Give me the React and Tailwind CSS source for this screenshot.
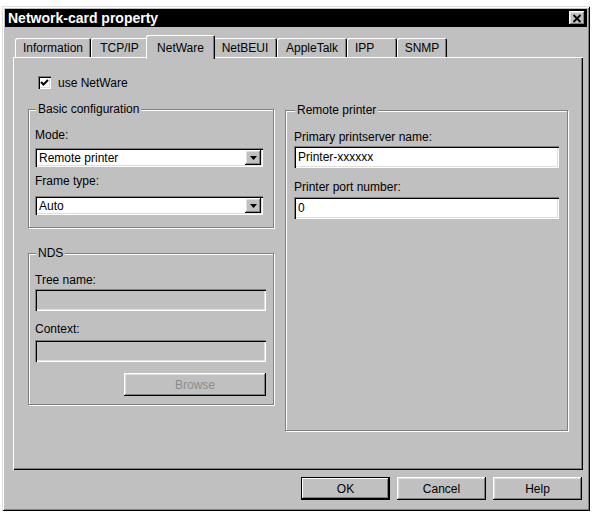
import React from "react";

const raised =
  "shadow-[inset_-1px_-1px_#000,inset_1px_1px_#fff,inset_-2px_-2px_#808080,inset_2px_2px_#dfdfdf]";
const sunken =
  "shadow-[inset_1px_1px_#808080,inset_2px_2px_#000,inset_-1px_-1px_#fff,inset_-2px_-2px_#dfdfdf]";

const tabs = [
  { label: "Information", w: "w-[76px]" },
  { label: "TCP/IP", w: "w-[57px]" },
  { label: "NetWare", w: "w-[69px]", active: true },
  { label: "NetBEUI", w: "w-[64px]" },
  { label: "AppleTalk", w: "w-[70px]" },
  { label: "IPP", w: "w-[50px]", pad: "justify-start pl-[8px]" },
  { label: "SNMP", w: "w-[50px]" },
];

function Tab({ label, w, active, pad }) {
  if (active) {
    return (
      <div
        className={`${w} relative z-10 -mx-[2px] -mb-[2px] flex h-[24px] items-start justify-center rounded-t-[2px] bg-[#c0c0c0] pt-[4px] shadow-[inset_1px_1px_#fff,inset_-1px_0_#000,inset_-2px_0_#808080]`}
      >
        {label}
      </div>
    );
  }
  return (
    <div
      className={`${w} flex h-[19px] items-center rounded-t-[2px] ${pad || "justify-center"} shadow-[inset_1px_1px_#fff,inset_-1px_0_#000,inset_-2px_0_#808080]`}
    >
      {label}
    </div>
  );
}

function Group({ label, labelLeft, className, children }) {
  return (
    <div
      className={`relative border border-[#808080] shadow-[inset_1px_1px_#fff,1px_1px_#fff] ${className}`}
    >
      <div className={`absolute -top-[8px] ${labelLeft} bg-[#c0c0c0] px-[2px] leading-[14px]`}>
        {label}
      </div>
      {children}
    </div>
  );
}

function Select({ value, className }) {
  return (
    <div className={`flex h-[19px] w-[228px] items-center bg-white pl-[4px] pr-[2px] ${sunken} ${className}`}>
      <span className="flex-1 leading-[14px]">{value}</span>
      <div className={`flex h-[15px] w-[16px] items-center justify-center bg-[#c0c0c0] ${raised}`}>
        <svg width="7" height="4" viewBox="0 0 7 4">
          <path d="M0 0 H7 L3.5 4 Z" fill="#000" />
        </svg>
      </div>
    </div>
  );
}

function Field({ value, disabled, className }) {
  return (
    <div
      className={`flex h-[22px] items-center pl-[4px] leading-[14px] ${sunken} ${disabled ? "bg-[#c0c0c0]" : "bg-white"} ${className}`}
    >
      {value}
    </div>
  );
}

function Button({ children, isDefault, disabled, className }) {
  return (
    <div
      className={`flex h-[23px] w-[89px] items-center justify-center bg-[#c0c0c0] leading-[14px] ${
        isDefault
          ? "shadow-[inset_0_0_0_1px_#000,inset_-2px_-2px_#000,inset_2px_2px_#fff,inset_-3px_-3px_#808080]"
          : raised
      } ${disabled ? "text-[#8c8c8c]" : ""} ${className}`}
    >
      {children}
    </div>
  );
}

export default function App() {
  return (
    <div className="h-[512px] w-[592px] bg-white pl-[2px] pt-[6px] font-['Liberation_Sans',Arial,sans-serif] text-[12px] text-black">
      <div className="flex h-[505px] w-[588px] flex-col bg-[#c0c0c0] p-[3px] shadow-[inset_1px_1px_#dfdfdf,inset_-1px_-1px_#000,inset_2px_2px_#fff,inset_-2px_-2px_#808080]">
        {/* title bar */}
        <div className="flex h-[18px] items-center justify-between bg-black pl-[3px] pr-[2px]">
          <span className="text-[14px] font-bold leading-none text-white">Network-card property</span>
          <div className={`flex h-[14px] w-[16px] items-center justify-center bg-[#c0c0c0] ${raised}`}>
            <svg width="10" height="9" viewBox="0 0 10 9">
              <path d="M1.5 1 L8.5 8 M8.5 1 L1.5 8" stroke="#000" strokeWidth="1.8" />
            </svg>
          </div>
        </div>

        {/* tabs */}
        <div className="mt-[8px] flex h-[22px] items-end pl-[10px]">
          {tabs.map((t) => (
            <Tab key={t.label} {...t} />
          ))}
        </div>

        {/* panel */}
        <div className="ml-[8px] flex h-[413px] w-[570px] flex-col pl-[15px] pt-[19px] shadow-[inset_1px_1px_#fff,inset_-1px_-1px_#000,inset_-2px_-2px_#808080]">
          <div className="flex h-[13px] items-center gap-[7px] pl-[10px]">
            <div className={`flex h-[13px] w-[13px] items-center justify-center bg-white ${sunken}`}>
              <svg width="9" height="9" viewBox="0 0 9 9">
                <path d="M1 4 L3.5 6.5 L8 2" stroke="#000" strokeWidth="2" fill="none" />
              </svg>
            </div>
            <span className="leading-[14px]">use NetWare</span>
          </div>

          <div className="mt-[20px] flex items-start gap-[11px]">
            <div className="flex flex-col">
              <Group label="Basic configuration" labelLeft="left-[7px]" className="h-[119px] w-[246px] px-[6px] pt-[18px]">
                <div className="leading-[14px]">Mode:</div>
                <Select value="Remote printer" className="mt-[6px]" />
                <div className="mt-[7px] leading-[14px]">Frame type:</div>
                <Select value="Auto" className="mt-[8px]" />
              </Group>

              <Group label="NDS" labelLeft="left-[7px]" className="mt-[25px] h-[152px] w-[246px] px-[6px] pt-[19px]">
                <div className="leading-[14px]">Tree name:</div>
                <Field disabled className="mt-[2px] w-[231px]" />
                <div className="mt-[11px] leading-[14px]">Context:</div>
                <Field disabled className="mt-[4px] w-[231px]" />
                <Button disabled className="ml-[89px] mt-[11px] w-[142px]">
                  Browse
                </Button>
              </Group>
            </div>

            <Group label="Remote printer" labelLeft="left-[9px]" className="mt-[1px] h-[321px] w-[283px] pl-[8px] pt-[19px]">
              <div className="leading-[14px]">Primary printserver name:</div>
              <Field value="Printer-xxxxxx" className="mt-[2px] w-[265px]" />
              <div className="mt-[12px] leading-[14px]">Printer port number:</div>
              <Field value="0" className="mt-[3px] w-[265px]" />
            </Group>
          </div>
        </div>

        {/* buttons */}
        <div className="mt-[7px] flex justify-end gap-[7px] pr-[5px]">
          <Button isDefault>OK</Button>
          <Button>Cancel</Button>
          <Button>Help</Button>
        </div>
      </div>
    </div>
  );
}
